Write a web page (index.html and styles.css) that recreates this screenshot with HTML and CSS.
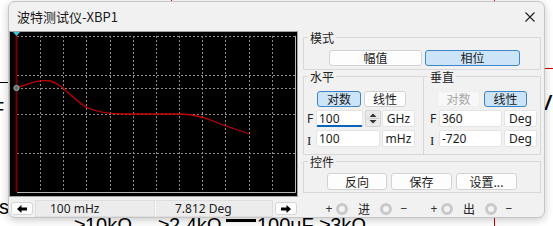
FILE: index.html
```html
<!DOCTYPE html>
<html lang="zh">
<head>
<meta charset="utf-8">
<title>波特测试仪-XBP1</title>
<link rel="stylesheet" href="styles.css">
</head>
<body>
<div class="bgl red v1"></div>
<div class="bgl red v2"></div>
<div class="bgl red h1"></div>
<div class="bgl blk h2"></div>
<div class="btext t-f">F</div>
<div class="btext t-v">/</div>
<div class="btext t-ns">ns</div>
<div class="btext t-b1">≥10kΩ</div>
<div class="btext t-b2">≥2.4kΩ</div>
<div class="bgl blk t-bar"></div>
<div class="btext t-b3">100uF ≥3kΩ</div>

<div class="window">
  <div class="titlebar">
    <span class="title">波特测试仪-XBP1</span>
    <svg class="close" viewBox="0 0 10 10"><path d="M0.5 0.5 L9.5 9.5 M9.5 0.5 L0.5 9.5" stroke="#1f1f1f" stroke-width="1.1" fill="none"/></svg>
  </div>
  <div class="main">
    <div class="left">
      <div class="plot">
        <svg width="287" height="164" viewBox="0 0 287 164">
          <g stroke="#8c8c8c" stroke-width="1" stroke-dasharray="2 2" fill="none">
            <path d="M7 4.5 H285 M7 43.5 H285 M7 56.5 H285 M7 82.5 H285 M7 121.5 H285"/>
            <path d="M30.5 4 V160 M53.5 4 V160 M76.5 4 V160 M100.5 4 V160 M123.5 4 V160 M146.5 4 V160 M169.5 4 V160 M192.5 4 V160 M215.5 4 V160 M239.5 4 V160 M262.5 4 V160"/>
          </g>
          <path d="M7 160.5 H285.5 V4" stroke="#b5b5b5" stroke-width="1" fill="none"/>
          <path d="M7 56 C18 52 28 47 40 49 C54 52 64 70 78 76 C90 81 100 82 114 82 L170 82 C183 82 193 85 203 89 C214 94 226 97 239 102" stroke="#c40000" stroke-width="1.3" fill="none"/>
          <path d="M6.5 0 V160" stroke="#7a0000" stroke-width="2"/>
          <polygon points="3,0 10,0 6.5,4" fill="#3cc6d6"/>
          <circle cx="6.5" cy="56" r="2.6" fill="#58706f" stroke="#9fb7b7" stroke-width="1"/>
        </svg>
      </div>
      <div class="readout">
        <div class="arrow"><svg width="10" height="8" viewBox="0 0 10 8"><path d="M0 4 L4.5 0 V2.6 H10 V5.4 H4.5 V8 Z" fill="#000"/></svg></div>
        <div class="field f1">100 mHz</div>
        <div class="field f2">7.812 Deg</div>
        <div class="arrow"><svg width="10" height="8" viewBox="0 0 10 8"><path d="M10 4 L5.5 0 V2.6 H0 V5.4 H5.5 V8 Z" fill="#000"/></svg></div>
      </div>
    </div>

    <div class="right">
      <fieldset class="grp mode">
        <legend>模式</legend>
        <div class="btnrow">
          <div class="btn w93">幅值</div>
          <div class="btn on w95">相位</div>
        </div>
      </fieldset>

      <div class="axes">
        <fieldset class="grp horiz">
          <legend>水平</legend>
          <div class="btnrow">
            <div class="btn on w44">对数</div>
            <div class="btn w42">线性</div>
          </div>
          <div class="row">
            <span class="lbl">F</span>
            <div class="inp focus w47">100</div>
            <div class="spin">
              <svg width="14" height="15" viewBox="0 0 14 15"><polygon points="3.5,6 10.5,6 7,2.5" fill="#333"/><path d="M1 7.5 H13" stroke="#cfcfcf"/><polygon points="3.5,9 10.5,9 7,12.5" fill="#333"/></svg>
            </div>
            <div class="inp unit w33">GHz</div>
          </div>
          <div class="row">
            <span class="lbl serif">I</span>
            <div class="inp w64">100</div>
            <div class="inp unit w33">mHz</div>
          </div>
        </fieldset>
        <fieldset class="grp vert">
          <legend>垂直</legend>
          <div class="btnrow">
            <div class="btn off w43">对数</div>
            <div class="btn on w43">线性</div>
          </div>
          <div class="row">
            <span class="lbl">F</span>
            <div class="inp w63">360</div>
            <div class="inp unit w33">Deg</div>
          </div>
          <div class="row">
            <span class="lbl serif">I</span>
            <div class="inp w63">-720</div>
            <div class="inp unit w33">Deg</div>
          </div>
        </fieldset>
      </div>

      <fieldset class="grp ctrl">
        <legend>控件</legend>
        <div class="btnrow">
          <div class="btn tall w60">反向</div>
          <div class="btn tall w61">保存</div>
          <div class="btn tall w61">设置...</div>
        </div>
      </fieldset>

      <div class="terms">
        <div class="term t1">
          <span class="sign">+</span><span class="jack"></span><span class="tname">进</span><span class="jack"></span><span class="sign minus">−</span>
        </div>
        <div class="term t2">
          <span class="sign">+</span><span class="jack"></span><span class="tname">出</span><span class="jack"></span><span class="sign minus">−</span>
        </div>
      </div>
    </div>
  </div>
</div>
</body>
</html>
```

FILE: styles.css
```css
* { box-sizing: border-box; }
html, body { margin: 0; padding: 0; }
body {
  width: 553px;
  height: 226px;
  overflow: hidden;
  position: relative;
  background: #ffffff;
  font-family: "Noto Sans", "Noto Sans CJK SC", sans-serif;
  color: #1b1b1b;
}

/* background schematic (free canvas) */
.bgl { position: absolute; }
.red { background: #d40000; }
.blk { background: #000; }
.v1 { left: 171px; top: 0; width: 1px; height: 6px; }
.v2 { left: 494px; top: 0; width: 1px; height: 226px; }
.h1 { left: 540px; top: 68px; width: 13px; height: 1px; }
.h2 { left: 0; top: 82px; width: 10px; height: 1px; }
.btext {
  position: absolute;
  font-family: "Liberation Sans", sans-serif;
  font-size: 20px;
  line-height: 20px;
  color: #000;
  white-space: nowrap;
}
.t-f { left: -8px; top: 99px; }
.t-v { left: 545px; top: 93px; font-weight: bold; font-style: italic; }
.t-ns { left: -12px; top: 197px; }
.t-b1 { left: 74px; top: 215px; }
.t-b2 { left: 158px; top: 215px; }
.t-bar { left: 226px; top: 219px; width: 30px; height: 3px; }
.t-b3 { left: 257px; top: 215px; }

/* window */
.window {
  position: absolute;
  left: 8px;
  top: 1px;
  width: 537px;
  height: 217px;
  background: #f1f1f1;
  border: 1px solid #c6c6c6;
  border-radius: 7px;
  box-shadow: 0 2px 9px rgba(0, 0, 0, 0.22);
  display: flex;
  flex-direction: column;
  overflow: hidden;
}
.titlebar {
  height: 29px;
  flex: none;
  display: flex;
  align-items: center;
  justify-content: space-between;
  padding: 0 9px 0 8px;
}
.title {
  font-family: "Noto Sans CJK SC", sans-serif;
  font-size: 13px;
  color: #1a1a1a;
  margin-top: -1px;
}
.close { width: 10px; height: 10px; display: block; }

.main { display: flex; flex: 1; }
.left { width: 289px; flex: none; display: flex; flex-direction: column; }
.plot {
  height: 166px;
  border: 1px solid #a3a3a3;
  background: #000;
}
.plot svg { display: block; }

.readout { display: flex; align-items: flex-start; padding-top: 3px; }
.arrow {
  width: 22px;
  height: 13px;
  margin: 2px 0 0 2px;
  background: #ffffff;
  border: 1px solid #d6d6d6;
  border-radius: 3px;
  display: flex;
  align-items: center;
  justify-content: center;
}
.field {
  height: 17px;
  background: #ececec;
  border: 1px solid #dedede;
  font-size: 12px;
  line-height: 15px;
  color: #1e1e1e;
  white-space: nowrap;
}
.f1 { width: 120px; margin-left: 2px; padding-left: 14px; }
.f2 { width: 118px; border-left-color: #fafafa; padding-left: 19px; }

/* right panel */
.right { width: 238px; margin-left: 5px; flex: none; display: flex; flex-direction: column; }
.grp {
  margin: 0;
  padding: 0;
  min-width: 0;
  border: 1px solid #d8d8d8;
}
.grp legend {
  font-family: "Noto Sans CJK SC", sans-serif;
  font-size: 12px;
  line-height: 13px;
  padding: 0 2px;
  margin-left: 4px;
  color: #222;
}
.btnrow { display: flex; }
.btn {
  height: 16px;
  background: #fdfdfd;
  border: 1px solid #d3d3d3;
  border-radius: 3px;
  font-family: "Noto Sans CJK SC", sans-serif;
  font-size: 12px;
  line-height: 14px;
  text-align: center;
  color: #1b1b1b;
}
.btn.on { background: #cce4f7; border-color: #3f86c8; }
.btn.off { background: #f7f7f7; border-color: #eeeeee; color: #a8a8a8; }
.btn.tall { height: 17px; line-height: 15px; }

.w33 { width: 33px; }
.w42 { width: 42px; }
.w43 { width: 43px; }
.w44 { width: 44px; }
.w47 { width: 47px; }
.w60 { width: 60px; }
.w61 { width: 61px; }
.w63 { width: 63px; }
.w64 { width: 64px; }
.w93 { width: 93px; }
.w95 { width: 95px; }

.mode { padding: 6px 0 3px 0; }
.mode .btnrow { gap: 3px; margin-left: 25px; }

.axes { display: flex; }
.horiz { width: 120px; border-right: none; padding: 8px 0 7px 0; }
.vert { width: 118px; padding: 8px 0 7px 0; }
.horiz .btnrow { margin-left: 13px; gap: 3px; }
.vert .btnrow { margin-left: 13px; gap: 4px; }

.row { display: flex; align-items: center; margin-top: 3px; gap: 2px; height: 17px; }
.horiz .row { padding-left: 3px; }
.vert .row { padding-left: 6px; }
.lbl { font-size: 12px; color: #222; width: 7px; line-height: 15px; }
.lbl.serif { font-family: "Liberation Serif", serif; font-size: 13px; margin-top: 3px; }
.inp {
  height: 17px;
  background: #ffffff;
  border: 1px solid #e4e4e4;
  border-radius: 2px;
  font-size: 12px;
  line-height: 15px;
  padding-left: 2px;
  color: #1b1b1b;
  white-space: nowrap;
}
.inp.focus { border-bottom: 2px solid #0a64be; }
.inp.unit { text-align: center; padding-left: 0; }
.spin {
  width: 16px;
  height: 17px;
  background: #e9e9e9;
  border: 1px solid #d4d4d4;
  border-radius: 2px;
  margin-right: -1px;
}
.spin svg { display: block; }

.ctrl { padding: 5px 0 2px 0; }
.ctrl .btnrow { gap: 4px; margin-left: 23px; }

.terms { display: flex; padding-top: 9px; padding-left: 22px; }
.term { display: flex; align-items: center; height: 13px; }
.t2 { margin-left: 22px; }
.sign { font-size: 12px; line-height: 13px; color: #333; width: 8px; text-align: center; }
.sign.minus { margin-left: 8px; }
.jack {
  width: 12px;
  height: 12px;
  border-radius: 50%;
  border: 3px solid #c9c9c9;
  background: #f4f4f4;
  margin-left: 3px;
}
.tname {
  font-family: "Noto Sans CJK SC", sans-serif;
  font-size: 12px;
  line-height: 13px;
  margin: 0 7px 0 10px;
  color: #222;
}
```
